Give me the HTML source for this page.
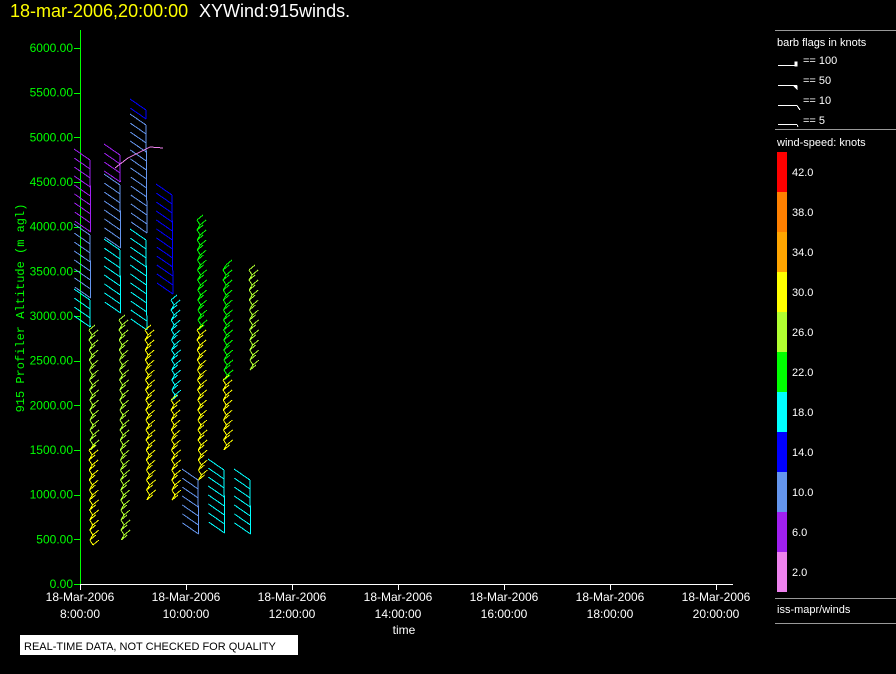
<!DOCTYPE html>
<html><head><meta charset="utf-8"><style>
html,body{margin:0;padding:0;background:#000;width:896px;height:674px;overflow:hidden}
body{position:relative;font-family:"Liberation Sans",sans-serif}
.t{position:absolute;white-space:nowrap}
</style></head><body>
<div class="t" style="left:10px;top:1px;font-size:18px;color:#ffff00">18-mar-2006,20:00:00</div>
<div class="t" style="left:199px;top:1px;font-size:18px;color:#fff">XYWind:915winds.</div>
<svg id="s" width="896" height="674" style="position:absolute;left:0;top:0" xmlns="http://www.w3.org/2000/svg" shape-rendering="crispEdges">
<g font-family="Liberation Sans" font-size="12" fill="#00ff00" text-anchor="end" id="yl"></g>
<line x1="80.5" y1="30" x2="80.5" y2="585" stroke="#00ff00"/>
<line x1="80" y1="584.5" x2="733" y2="584.5" stroke="#fff"/>
<g id="xl" font-family="Liberation Sans" font-size="12" fill="#fff" text-anchor="middle"></g>
<text x="404" y="634" font-family="Liberation Sans" font-size="12" fill="#fff" text-anchor="middle">time</text>
<text transform="translate(24,308) rotate(-90)" font-family="Liberation Mono" font-size="12" fill="#00ff00" text-anchor="middle">915 Profiler Altitude (m agl)</text>
<g id="b" stroke-width="1" fill="none"></g>
<rect x="20" y="635" width="278" height="20" fill="#fff"/>
<text x="24" y="650" font-family="Liberation Sans" font-size="11" fill="#000">REAL-TIME DATA, NOT CHECKED FOR QUALITY</text>
<g stroke="#999"><line x1="775" y1="30.5" x2="896" y2="30.5"/><line x1="775" y1="129.5" x2="896" y2="129.5"/><line x1="775" y1="598.5" x2="896" y2="598.5"/><line x1="775" y1="623.5" x2="896" y2="623.5"/></g>
<g font-family="Liberation Sans" font-size="11" fill="#fff">
<text x="777" y="46">barb flags in knots</text>
<text x="803" y="64">== 100</text><text x="803" y="84">== 50</text><text x="803" y="104">== 10</text><text x="803" y="124">== 5</text>
<text x="777" y="146">wind-speed: knots</text>
<text x="777" y="613">iss-mapr/winds</text>
</g>
<g stroke="#fff" fill="#fff">
<line x1="778" y1="65.5" x2="797" y2="65.5"/><rect x="795" y="62" width="2" height="4"/>
<line x1="778" y1="85.5" x2="797" y2="85.5"/><polygon points="794,86 797,86 797,89"/>
<line x1="778" y1="105.5" x2="797" y2="105.5"/><line x1="797" y1="105.5" x2="800" y2="110"/>
<line x1="778" y1="124.5" x2="797" y2="124.5"/><line x1="797" y1="124.5" x2="798" y2="127"/>
</g>
<g id="cb" font-family="Liberation Sans" font-size="11" fill="#fff"></g>
</svg>
<script>
var NS="http://www.w3.org/2000/svg";
function el(p,t,a,txt){var e=document.createElementNS(NS,t);for(var k in a)e.setAttribute(k,a[k]);if(txt!=null)e.textContent=txt;document.getElementById(p).appendChild(e);return e;}
for(var i=0;i<=12;i++){var y=584-i*44.67;el('yl','text',{x:73,y:y+4},(i*500).toFixed(2));el('yl','line',{x1:74,y1:Math.round(y)+.5,x2:80,y2:Math.round(y)+.5,stroke:'#00ff00'});}
var hrs=['8:00:00','10:00:00','12:00:00','14:00:00','16:00:00','18:00:00','20:00:00'];
for(var i=0;i<7;i++){var x=80+i*106;el('xl','line',{x1:x+.5,y1:584,x2:x+.5,y2:590,stroke:'#fff'});el('xl','text',{x:x,y:601},'18-Mar-2006');el('xl','text',{x:x,y:618},hrs[i]);}
var cols=['#ff0000','#ff8000','#ffa500','#ffff00','#b0ff30','#00ff00','#00ffff','#0000ff','#6495ed','#a020f0','#ee82ee'];
var labs=['42.0','38.0','34.0','30.0','26.0','22.0','18.0','14.0','10.0','6.0','2.0'];
for(var i=0;i<11;i++){var y=152+i*40;el('cb','rect',{x:777,y:y,width:10,height:40,fill:cols[i]});el('cb','text',{x:792,y:y+24},labs[i]);}
var C=[
[90,[[160,235,'#a020f0',1],[235,300,'#6495ed',1],[300,330,'#00ffff',1],[330,450,'#b0ff30',0],[450,548,'#ffff00',0]]],
[120,[[155,185,'#a020f0',1],[185,250,'#6495ed',1],[250,320,'#00ffff',1],[320,540,'#b0ff30',0]]],
[146,[[110,125,'#0000ff',1],[125,240,'#6495ed',1],[240,330,'#00ffff',1],[330,500,'#ffff00',0]]],
[172,[[195,300,'#0000ff',1],[300,400,'#00ffff',0],[400,500,'#ffff00',0]]],
[198,[[220,330,'#00ff00',0],[330,480,'#ffff00',0],[480,540,'#6495ed',1]]],
[224,[[265,380,'#00ff00',0],[380,450,'#ffff00',0],[470,540,'#00ffff',1]]],
[250,[[270,370,'#b0ff30',0],[480,540,'#00ffff',1]]]];
C.forEach(function(c){var x0=c[0];c[1].forEach(function(b){
 var pts=[];for(var y=b[0];y<=b[1];y+=b[3]?9:5){var x=x0+(y-b[0])*0.01+((y/5)%2?2:-1)*(b[3]?0:1);pts.push(x+','+y);
  if(b[3])el('b','line',{x1:x,y1:y,x2:x-16,y2:y-11,stroke:b[2]});else el('b','line',{x1:x,y1:y,x2:x+6,y2:y-5,stroke:b[2]});}
 el('b','polyline',{points:pts.join(' '),stroke:b[2]});});});
el('b','polyline',{points:'115,168 128,158 140,152 150,147 163,148',stroke:'#ee82ee'});
</script>
</body></html>
